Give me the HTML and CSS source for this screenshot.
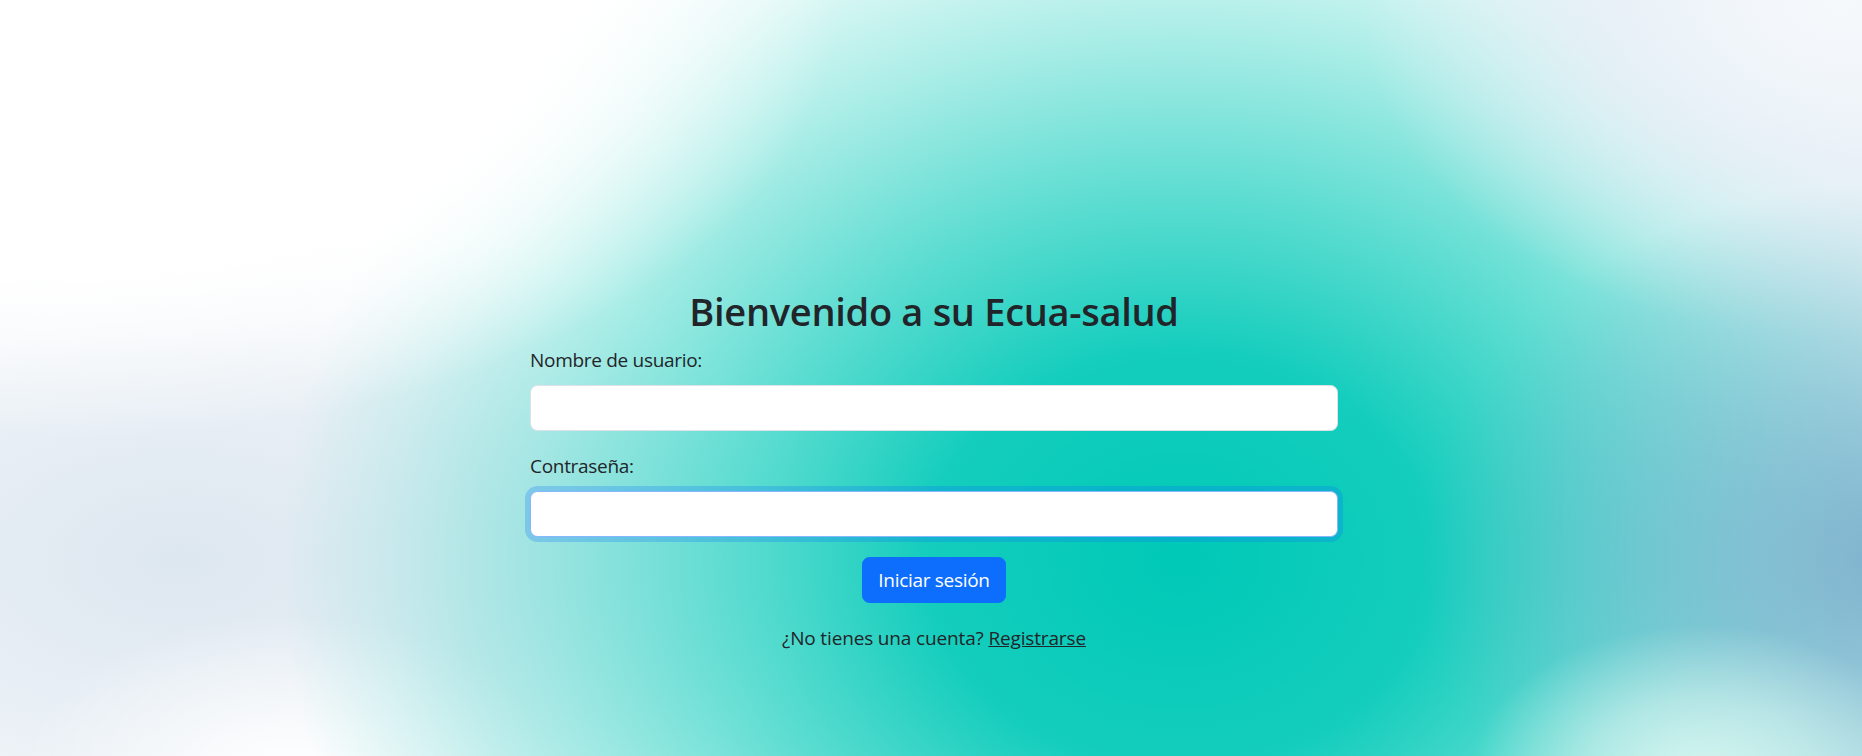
FILE: index.html
```html
<!DOCTYPE html>
<html lang="es">
<head>
<meta charset="utf-8">
<title>Ecua-salud</title>
<link rel="stylesheet" href="styles.css">
</head>
<body>
<main class="page">
  <div class="login">
    <h2 class="title">Bienvenido a su Ecua-salud</h2>
    <form class="form">
      <div class="field">
        <label class="label" for="user">Nombre de usuario:</label>
        <input class="input" id="user" type="text">
      </div>
      <div class="field">
        <label class="label" for="pass">Contraseña:</label>
        <input class="input input-focus" id="pass" type="password">
      </div>
      <div class="actions">
        <button class="btn" type="button">Iniciar sesión</button>
      </div>
    </form>
    <p class="signup">¿No tienes una cuenta? <a class="link" href="#">Registrarse</a></p>
  </div>
</main>
</body>
</html>
```
FILE: styles.css
```css
html, body {
  margin: 0;
  padding: 0;
}
body {
  min-height: 100vh;
  font-family: "Segoe UI", "Open Sans", "Noto Sans", sans-serif;
  color: #212529;
  background:
    radial-gradient(ellipse 230px 150px at 1700px 775px, rgba(214,246,240,1) 0%, rgba(214,246,240,0.6) 50%, rgba(214,246,240,0) 100%),
    radial-gradient(ellipse 480px 380px at 1900px 560px, rgba(122,174,204,0.95) 0%, rgba(122,174,204,0.55) 45%, rgba(122,174,204,0) 100%),
    radial-gradient(ellipse 480px 340px at 1840px 0px, rgba(246,249,252,1) 0%, rgba(232,239,247,0.85) 50%, rgba(232,239,247,0) 100%),
    radial-gradient(ellipse 780px 440px at 60px 0px, rgba(255,255,255,1) 0%, rgba(255,255,255,1) 62%, rgba(255,255,255,0) 100%),
    radial-gradient(ellipse 900px 740px at 1180px 560px, rgba(0,201,183,1) 0%, rgba(0,201,183,0.92) 28%, rgba(0,201,183,0.6) 52%, rgba(0,201,183,0.32) 72%, rgba(0,201,183,0.12) 88%, rgba(0,201,183,0) 100%),
    radial-gradient(ellipse 270px 160px at 290px 775px, rgba(255,255,255,1) 0%, rgba(255,255,255,0) 100%),
    radial-gradient(ellipse 620px 360px at 180px 560px, rgba(221,231,240,1) 0%, rgba(221,231,240,0.6) 55%, rgba(221,231,240,0) 100%),
    #ffffff;
}
.page {
  display: flex;
  justify-content: center;
  padding-top: 287px;
  padding-left: 6px;
}
.login {
  width: 808px;
  display: flex;
  flex-direction: column;
}
.title {
  margin: 0 0 10px;
  text-align: center;
  font-size: 38px;
  font-weight: 600;
  letter-spacing: -0.3px;
  line-height: 48px;
}
.form {
  display: flex;
  flex-direction: column;
}
.field {
  display: flex;
  flex-direction: column;
  margin-bottom: 20px;
}
.label {
  font-size: 19px;
  letter-spacing: -0.3px;
  line-height: 30px;
  margin-bottom: 10px;
}
.input {
  box-sizing: border-box;
  height: 46px;
  font-size: 20px;
  font-family: inherit;
  padding: 7px 15px;
  border: 1px solid #dee2e6;
  border-radius: 7.5px;
  background: #ffffff;
  outline: none;
}
.input-focus {
  border-color: #86b7fe;
  box-shadow: 0 0 0 5px rgba(13,110,253,0.25);
}
.actions {
  display: flex;
  justify-content: center;
}
.btn {
  height: 46px;
  padding: 0 15px;
  font-family: inherit;
  font-size: 19px;
  letter-spacing: -0.3px;
  color: #ffffff;
  background: #0d6efd;
  border: 1px solid #0d6efd;
  border-radius: 7.5px;
}
.signup {
  margin: 20px 0 0;
  text-align: center;
  font-size: 19px;
  letter-spacing: -0.15px;
  line-height: 30px;
}
.link {
  color: #212529;
  text-decoration: underline;
}
```
